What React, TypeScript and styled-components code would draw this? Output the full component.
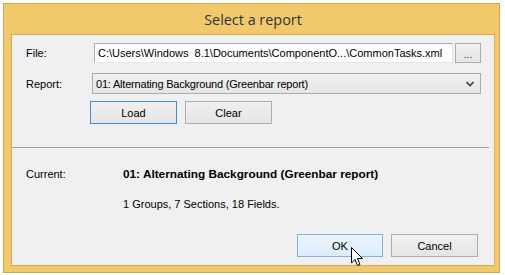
import React from "react";
import styled, { createGlobalStyle } from "styled-components";

const Global = createGlobalStyle`
  html, body {
    margin: 0;
    padding: 0;
    background: #ffffff;
  }
  body {
    font-family: "Liberation Sans", Arial, sans-serif;
    font-size: 11px;
    color: #000;
  }
`;

const Window = styled.div`
  margin: 3px 0 0 3px;
  width: 497px;
  height: 270px;
  box-sizing: border-box;
  border: 1px solid #d5a64c;
  background: #f1c96b;
  display: flex;
  flex-direction: column;
  padding: 0 4px 6px 7px;
`;

const TitleBar = styled.div`
  height: 30px;
  display: flex;
  align-items: center;
  justify-content: center;
  font-family: "Open Sans", "Noto Sans", sans-serif;
  font-size: 14.4px;
  color: #2b3440;
  padding-top: 1px;
  box-sizing: border-box;
`;

const Client = styled.div`
  flex: 1;
  background: #f0f0f0;
  border: 1px solid #d2a954;
  border-right-color: #e0b860;
  display: flex;
  flex-direction: column;
  position: relative;
`;

const TopSection = styled.div`
  padding: 8px 0 0 14px;
  display: flex;
  flex-direction: column;
`;

const Row = styled.div<{ $top?: number }>`
  display: flex;
  align-items: center;
  margin-top: ${(p) => p.$top ?? 0}px;
`;

const Label = styled.div<{ $w: number }>`
  width: ${(p) => p.$w}px;
  flex-shrink: 0;
  white-space: nowrap;
`;

const TextBox = styled.div`
  width: 359px;
  height: 20px;
  box-sizing: border-box;
  background: #fff;
  border: 1px solid #abadb3;
  border-right-color: #e3e9ef;
  border-bottom-color: #e3e9ef;
  padding: 0 3px;
  display: flex;
  align-items: center;
  white-space: nowrap;
  overflow: hidden;
`;

const Btn = styled.div<{ $w: number; $h?: number; $variant?: "focus" | "hover" }>`
  width: ${(p) => p.$w}px;
  height: ${(p) => p.$h ?? 23}px;
  box-sizing: border-box;
  display: flex;
  align-items: center;
  justify-content: center;
  position: relative;
  border: 1px solid
    ${(p) =>
      p.$variant === "focus" ? "#3c8fe0" : p.$variant === "hover" ? "#7eb4ea" : "#adadad"};
  background: ${(p) =>
    p.$variant === "hover"
      ? "linear-gradient(#ecf4fc, #dcecfc)"
      : "linear-gradient(#f0f0f0, #e5e5e5)"};
  color: #000;
`;

const Dots = styled.span`
  color: #1a1a6a;
  font-size: 10px;
  letter-spacing: 0;
  margin-top: 3px;
`;

const Combo = styled.div`
  width: 389px;
  height: 21px;
  box-sizing: border-box;
  border: 1px solid #acacac;
  background: linear-gradient(#f0f0f0, #e5e5e5);
  display: flex;
  align-items: center;
  padding: 0 6px 0 3px;
  justify-content: space-between;
  letter-spacing: -0.2px;
`;

const ButtonRow = styled.div`
  display: flex;
  gap: 8px;
  margin: 7px 0 0 64px;
`;

const Separator = styled.div`
  height: 1px;
  width: 477px;
  background: #a0a0a0;
  margin: 23px 0 0 -14px;
`;

const Bottom = styled.div`
  flex: 1;
  display: flex;
  flex-direction: column;
  padding: 19px 16px 8px 14px;
`;

const Bold = styled.div`
  font-weight: bold;
  font-size: 11.8px;
`;

const Stats = styled.div`
  margin: 17px 0 0 97px;
`;

const Footer = styled.div`
  margin-top: auto;
  display: flex;
  justify-content: flex-end;
  gap: 8px;
`;

const Cursor = styled.svg`
  position: absolute;
  left: 53px;
  top: 12px;
  width: 13px;
  height: 20px;
`;

export default function App() {
  return (
    <>
      <Global />
      <Window>
        <TitleBar>Select a report</TitleBar>
        <Client>
          <TopSection>
            <Row>
              <Label $w={68}>File:</Label>
              <TextBox>C:\Users\Windows&nbsp; 8.1\Documents\ComponentO...\CommonTasks.xml</TextBox>
              <Btn $w={26} $h={20} style={{ marginLeft: 2 }}>
                <Dots>...</Dots>
              </Btn>
            </Row>
            <Row $top={10}>
              <Label $w={66}>Report:</Label>
              <Combo>
                <span>01: Alternating Background (Greenbar report)</span>
                <svg width="8" height="6" viewBox="0 0 8 6">
                  <path d="M0.5 1 L4 4.5 L7.5 1" fill="none" stroke="#444" strokeWidth="1.6" />
                </svg>
              </Combo>
            </Row>
            <ButtonRow>
              <Btn $w={87} $variant="focus">Load</Btn>
              <Btn $w={87}>Clear</Btn>
            </ButtonRow>
            <Separator />
          </TopSection>
          <Bottom>
            <Row>
              <Label $w={97}>Current:</Label>
              <Bold>01: Alternating Background (Greenbar report)</Bold>
            </Row>
            <Stats>1 Groups, 7 Sections, 18 Fields.</Stats>
            <Footer>
              <Btn $w={86} $variant="hover">
                OK
                <Cursor viewBox="0 0 13 20">
                  <path
                    d="M0.5 0.5 L0.5 16 L4 12.5 L6.5 18.5 L9 17.5 L6.5 11.5 L11.5 11.5 Z"
                    fill="#fff"
                    stroke="#000"
                    strokeWidth="1"
                    strokeLinejoin="miter"
                  />
                </Cursor>
              </Btn>
              <Btn $w={87}>Cancel</Btn>
            </Footer>
          </Bottom>
        </Client>
      </Window>
    </>
  );
}
